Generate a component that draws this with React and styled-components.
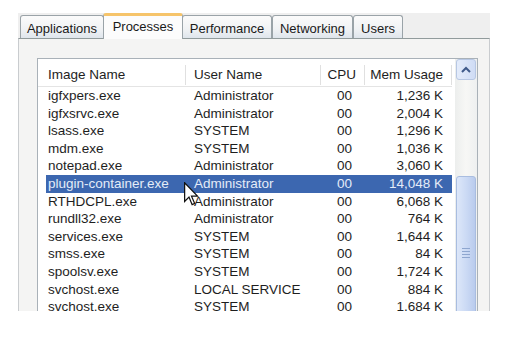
import React from "react";
import styled, { createGlobalStyle } from "styled-components";

const Global = createGlobalStyle`
  html, body {
    margin: 0;
    padding: 0;
    background: #ffffff;
  }
  body {
    font-family: "Liberation Sans", Arial, sans-serif;
    color: #1e1e1e;
  }
`;

const Page = styled.div`
  width: 517px;
  height: 339px;
  padding: 13px 0 0 18px;
  box-sizing: border-box;
  background: #fff;
`;

const Frame = styled.div`
  width: 472px;
  height: 298px;
  background: #efefef;
  overflow: hidden;
  display: flex;
  flex-direction: column;
`;

const TabStrip = styled.div`
  height: 27px;
  display: flex;
  align-items: flex-end;
  padding-left: 2px;
`;

const Tab = styled.div`
  width: ${(p) => p.w}px;
  height: ${(p) => (p.active ? 26 : 23)}px;
  box-sizing: border-box;
  display: flex;
  align-items: center;
  justify-content: center;
  font-size: 13px;
  color: #1a1a1a;
  border: 1px solid #9aa3a8;
  border-bottom: none;
  border-radius: 3px 3px 0 0;
  margin-left: ${(p) => (p.active ? -1 : 0)}px;
  margin-right: ${(p) => (p.active ? -1 : 0)}px;
  position: relative;
  z-index: ${(p) => (p.active ? 2 : 1)};
  margin-bottom: ${(p) => (p.active ? -1 : 0)}px;
  padding-top: ${(p) => (p.active ? 0 : 2)}px;
  padding-bottom: ${(p) => (p.active ? 2 : 0)}px;
  background: ${(p) =>
    p.active
      ? "#fcfcfc"
      : "linear-gradient(#fbfbfb 0%, #f0f2f4 60%, #dfe5ec 100%)"};
  border-top: ${(p) => (p.active ? "3px solid #f6c46a" : "1px solid #9aa3a8")};
`;

const Panel = styled.div`
  flex: 1;
  border-top: 1px solid #919b9c;
  border-left: 1px solid #c9cccf;
  border-right: 1px solid #c9cccf;
  background: #f4f4f3;
  padding: 19px 0 0 18px;
  box-sizing: border-box;
`;

const ListView = styled.div`
  position: relative;
  width: 441px;
  height: 300px;
  box-sizing: border-box;
  border: 1px solid #a9b1b8;
  background: #fff;
  display: flex;
`;

const Table = styled.div`
  flex: 1;
  display: flex;
  flex-direction: column;
`;

const cols = "140px 135px 44px 87px";

const Header = styled.div`
  height: 28px;
  flex-shrink: 0;
  box-sizing: border-box;
  padding-top: 5px;
  border-bottom: 1px solid #e4e4e4;
  display: grid;
  grid-template-columns: ${cols};
  align-items: center;
  padding-left: 8px;
  margin-right: 3px;
`;

const HeadCell = styled.div`
  height: 20px;
  line-height: 20px;
  font-size: 13.5px;
  border-right: 1px solid #e0e0e0;
  text-align: ${(p) => (p.right ? "right" : "left")};
  padding: ${(p) => (p.right ? "0 8px 0 0" : `0 0 0 ${p.pl}px`)};
  white-space: nowrap;
`;

const Row = styled.div`
  height: 17.6px;
  flex-shrink: 0;
  display: grid;
  grid-template-columns: ${cols};
  align-items: center;
  margin-left: 8px;
  margin-right: 3px;
  background: ${(p) => (p.selected ? "#3c67b0" : "transparent")};
  color: ${(p) => (p.selected ? "#e4ecf8" : "#1e1e1e")};
`;

const Cell = styled.div`
  font-size: 13.5px;
  line-height: 17.6px;
  white-space: nowrap;
  text-align: ${(p) => (p.right ? "right" : "left")};
  padding-left: ${(p) => p.pl || 0}px;
  padding-right: ${(p) => p.pr || 0}px;
`;

const ScrollBar = styled.div`
  width: 22px;
  padding: 0 1px;
  box-sizing: border-box;
  background: linear-gradient(90deg, #eceeed 0%, #f7f7f5 50%, #eef0f0 100%);
  display: flex;
  flex-direction: column;
`;

const UpButton = styled.div`
  height: 21px;
  box-sizing: border-box;
  border: 1px solid #b7c7e3;
  border-radius: 3px;
  background: linear-gradient(90deg, #e4ecfb 0%, #cfdcf5 100%);
  display: flex;
  align-items: center;
  justify-content: center;
`;

const Thumb = styled.div`
  margin-top: 96px;
  flex: 1;
  box-sizing: border-box;
  border: 1px solid #a9bde0;
  border-radius: 3px;
  background: linear-gradient(90deg, #dde7f9 0%, #cad9f4 55%, #b9cbed 100%);
  display: flex;
  flex-direction: column;
  align-items: center;
  padding-top: 71px;
  gap: 2px;
`;

const Grip = styled.div`
  width: 8px;
  height: 1px;
  background: #8ea6cf;
`;

const Cursor = styled.svg`
  position: absolute;
  left: 146px;
  top: 123px;
`;

const rows = [
  ["igfxpers.exe", "Administrator", "1,236 K"],
  ["igfxsrvc.exe", "Administrator", "2,004 K"],
  ["lsass.exe", "SYSTEM", "1,296 K"],
  ["mdm.exe", "SYSTEM", "1,036 K"],
  ["notepad.exe", "Administrator", "3,060 K"],
  ["plugin-container.exe", "Administrator", "14,048 K"],
  ["RTHDCPL.exe", "Administrator", "6,068 K"],
  ["rundll32.exe", "Administrator", "764 K"],
  ["services.exe", "SYSTEM", "1,644 K"],
  ["smss.exe", "SYSTEM", "84 K"],
  ["spoolsv.exe", "SYSTEM", "1,724 K"],
  ["svchost.exe", "LOCAL SERVICE", "884 K"],
  ["svchost.exe", "SYSTEM", "1,684 K"],
];

const tabs = [
  ["Applications", 84],
  ["Processes", 80],
  ["Performance", 90],
  ["Networking", 81],
  ["Users", 50],
];

const App = () => {
  return (
    <Page>
      <Global />
      <Frame>
        <TabStrip>
          {tabs.map(([name, w]) => (
            <Tab key={name} w={w} active={name === "Processes"}>
              {name}
            </Tab>
          ))}
        </TabStrip>
        <Panel>
          <ListView>
            <Table>
              <Header>
                <HeadCell pl={2}>Image Name</HeadCell>
                <HeadCell pl={8}>User Name</HeadCell>
                <HeadCell right>CPU</HeadCell>
                <HeadCell right>Mem Usage</HeadCell>
              </Header>
              {rows.map((r, i) => (
                <Row key={i} selected={r[0] === "plugin-container.exe"}>
                  <Cell pl={2}>{r[0]}</Cell>
                  <Cell pl={8}>{r[1]}</Cell>
                  <Cell right pr={13}>
                    00
                  </Cell>
                  <Cell right pr={9}>
                    {r[2]}
                  </Cell>
                </Row>
              ))}
            </Table>
            <ScrollBar>
              <UpButton>
                <svg width="10" height="7" viewBox="0 0 10 7">
                  <path
                    d="M1 6 L5 2 L9 6"
                    fill="none"
                    stroke="#3f5a8a"
                    strokeWidth="2"
                  />
                </svg>
              </UpButton>
              <Thumb>
                <Grip />
                <Grip />
                <Grip />
                <Grip />
              </Thumb>
            </ScrollBar>
            <Cursor width="15" height="24" viewBox="0 0 12 19">
              <path
                d="M0.5 0.5 L0.5 15.5 L4 12 L6.5 18 L8.5 17 L6 11.2 L10.8 11.2 Z"
                fill="#fff"
                stroke="#111"
                strokeWidth="1"
                strokeLinejoin="miter"
              />
            </Cursor>
          </ListView>
        </Panel>
      </Frame>
    </Page>
  );
};

export default App;
